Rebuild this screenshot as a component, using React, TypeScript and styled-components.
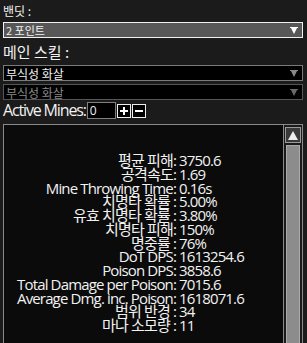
import React from "react";
import styled, { createGlobalStyle } from "styled-components";

const Global = createGlobalStyle`
  html, body { margin: 0; padding: 0; background: #1b1b1b; }
  body { font-family: "Open Sans", "Noto Sans CJK KR", sans-serif; color: #fff; overflow: hidden; }
`;

const Page = styled.div`
  width: 307px;
  height: 343px;
  padding: 0 4px 0 3px;
  box-sizing: border-box;
  display: flex;
  flex-direction: column;
`;

const Label = styled.div<{ $size: number; $top: number; $h: number }>`
  font-family: "Noto Sans CJK KR", sans-serif;
  font-size: ${(p) => p.$size}px;
  line-height: ${(p) => p.$h}px;
  height: ${(p) => p.$h}px;
  margin-top: ${(p) => p.$top}px;
  color: #f2f2f2;
  white-space: nowrap;
`;

const Select = styled.div<{ $variant: "light" | "dark" | "disabled"; $top: number }>`
  height: 16px;
  box-sizing: border-box;
  margin-top: ${(p) => p.$top}px;
  display: flex;
  align-items: center;
  justify-content: space-between;
  padding: 0 4px 0 2px;
  font-family: "Noto Sans CJK KR", sans-serif;
  font-size: ${(p) => (p.$variant === "light" ? 11 : 12)}px;
  background: ${(p) => (p.$variant === "light" ? "#575757" : "#000")};
  border: 1px solid ${(p) => (p.$variant === "light" ? "#f0f0f0" : p.$variant === "dark" ? "#7a7a7a" : "#555")};
  color: ${(p) => (p.$variant === "disabled" ? "#8a8a8a" : "#f2f2f2")};
`;

const Arrow = styled.svg`
  width: 8px;
  height: 7px;
  flex: none;
`;

const MinesRow = styled.div`
  display: flex;
  align-items: center;
  margin-top: 2px;
  height: 17px;
`;

const MinesLabel = styled.span`
  font-family: "Open Sans", sans-serif;
  font-size: 16px;
  letter-spacing: -1.15px;
  color: #f2f2f2;
  line-height: 17px;
  white-space: nowrap;
  margin-right: 1px;
`;

const NumInput = styled.div`
  width: 29px;
  height: 17px;
  box-sizing: border-box;
  border: 1px solid #808080;
  background: #000;
  font-size: 12px;
  line-height: 15px;
  padding-left: 2px;
  color: #f2f2f2;
`;

const StepButton = styled.div`
  width: 14px;
  height: 14px;
  box-sizing: border-box;
  margin-left: 1px;
  border: 1px solid #eee;
  background: #000;
  display: flex;
  align-items: center;
  justify-content: center;
`;

const Panel = styled.div`
  margin-top: 5px;
  flex: 1;
  border: 1px solid #8a8a8a;
  border-bottom: none;
  background: #0b0b0b;
  display: flex;
  min-height: 0;
`;

const Stats = styled.div`
  flex: 1;
  padding-top: 29px;
  display: grid;
  grid-template-columns: 172px 1fr;
  grid-auto-rows: 13.75px;
  column-gap: 3px;
  align-content: start;
  overflow: hidden;
`;

const Key = styled.div`
  text-align: right;
  font-family: "Open Sans", "Noto Sans CJK KR", sans-serif;
  font-size: 15px;
  line-height: 13.75px;
  height: 13.75px;
  letter-spacing: -0.85px;
  color: #f2f2f2;
  white-space: nowrap;
`;

const Val = styled(Key)`
  text-align: left;
`;

const ScrollBar = styled.div`
  width: 18px;
  border-left: 1px solid #8a8a8a;
  display: flex;
  flex-direction: column;
  align-items: center;
  padding-top: 2px;
  gap: 2px;
  background: #1a1a1a;
`;

const ScrollUp = styled.div`
  width: 16px;
  height: 16px;
  box-sizing: border-box;
  border: 1px solid #9a9a9a;
  background: #3a3a3a;
  display: flex;
  align-items: center;
  justify-content: center;
`;

const Thumb = styled.div`
  width: 14px;
  flex: 1;
  background: #8c8c8c;
  border: 1px solid #aaa;
  border-bottom: none;
  box-sizing: border-box;
`;

const stats: [string, string][] = [
  ["평균 피해:", "3750.6"],
  ["공격속도:", "1.69"],
  ["Mine Throwing Time:", "0.16s"],
  ["치명타 확률 :", "5.00%"],
  ["유효 치명타 확률 :", "3.80%"],
  ["치명타 피해:", "150%"],
  ["명중률 :", "76%"],
  ["DoT DPS:", "1613254.6"],
  ["Poison DPS:", "3858.6"],
  ["Total Damage per Poison:", "7015.6"],
  ["Average Dmg. inc. Poison:", "1618071.6"],
  ["범위 반경 :", "34"],
  ["마나 소모량 :", "11"],
];

const Down = ({ color }: { color: string }) => (
  <Arrow viewBox="0 0 8 7">
    <path d="M0 0H8V1H7L4 7L1 1H0Z" fill={color} />
  </Arrow>
);

export default function App() {
  return (
    <>
      <Global />
      <Page>
        <Label $size={12} $top={3} $h={16}>밴딧 :</Label>
        <Select $variant="light" $top={3}>
          <span>2 포인트</span>
          <Down color="#fff" />
        </Select>
        <Label $size={15} $top={3} $h={21}>메인 스킬 :</Label>
        <Select $variant="dark" $top={3}>
          <span>부식성 화살</span>
          <Down color="#8a8a8a" />
        </Select>
        <Select $variant="disabled" $top={3}>
          <span>부식성 화살</span>
          <Down color="#6a6a6a" />
        </Select>
        <MinesRow>
          <MinesLabel>Active Mines:</MinesLabel>
          <NumInput>0</NumInput>
          <StepButton>
            <svg width="10" height="10" viewBox="0 0 10 10">
              <path d="M4 1H6V4H9V6H6V9H4V6H1V4H4Z" fill="#fff" />
            </svg>
          </StepButton>
          <StepButton>
            <svg width="10" height="10" viewBox="0 0 10 10">
              <path d="M1 4H9V6H1Z" fill="#fff" />
            </svg>
          </StepButton>
        </MinesRow>
        <Panel>
          <Stats>
            {stats.map(([k, v]) => (
              <React.Fragment key={k}>
                <Key>{k}</Key>
                <Val>{v}</Val>
              </React.Fragment>
            ))}
          </Stats>
          <ScrollBar>
            <ScrollUp>
              <svg width="10" height="9" viewBox="0 0 10 9">
                <path d="M5 0L10 9H0Z" fill="#eee" />
              </svg>
            </ScrollUp>
            <Thumb />
          </ScrollBar>
        </Panel>
      </Page>
    </>
  );
}
